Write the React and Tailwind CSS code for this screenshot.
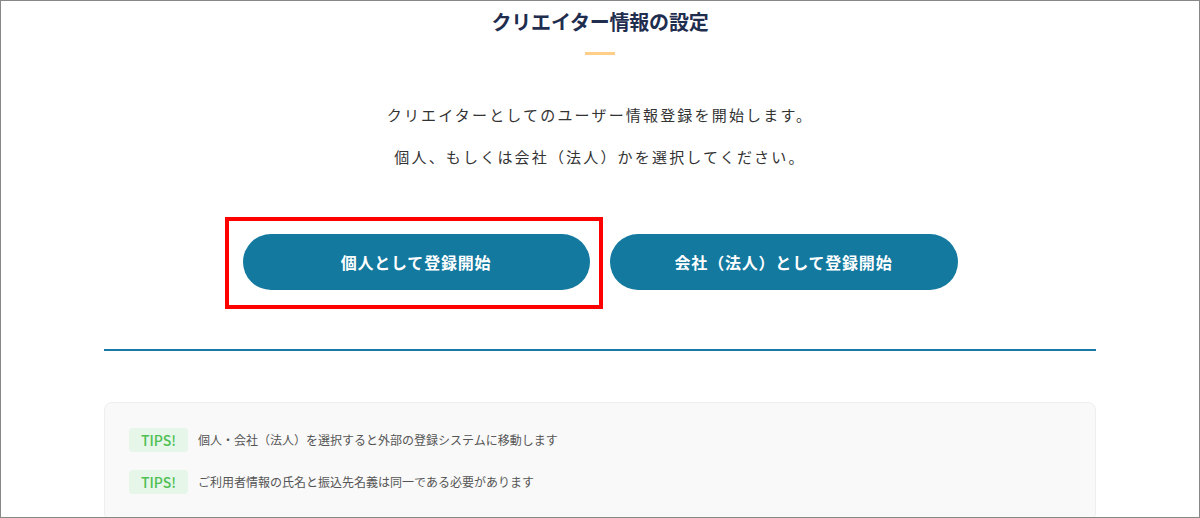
import React from 'react';

const tips = [
  '個人・会社（法人）を選択すると外部の登録システムに移動します',
  'ご利用者情報の氏名と振込先名義は同一である必要があります',
];

const App = () => {
  return (
    <div
      className="h-[518px] w-[1200px] overflow-hidden border border-[#888] bg-white"
      style={{ fontFamily: '"Noto Sans CJK JP", "Noto Sans", sans-serif' }}
    >
      <div className="mx-auto flex w-[992px] flex-col items-center pt-[7px]">
        {/* 見出し */}
        <h1 className="text-[20px] font-bold leading-[28px] tracking-[-0.01em] text-[#1f2d4f]">
          クリエイター情報の設定
        </h1>
        <div className="mt-[16px] h-[3px] w-[30px] bg-[#ffcf87]" />

        {/* 説明文 */}
        <div className="mt-[39px] text-center text-[15px] leading-[42px] tracking-[0.145em] text-[#333]">
          <p>クリエイターとしてのユーザー情報登録を開始します。</p>
          <p>個人、もしくは会社（法人）かを選択してください。</p>
        </div>

        {/* ボタン */}
        <div className="mt-[56px] flex gap-[20px]">
          <div className="relative">
            <button className="h-[56px] w-[347px] rounded-full bg-[#13799f] text-[16px] font-bold tracking-[0.05em] text-white">
              個人として登録開始
            </button>
            <span className="pointer-events-none absolute left-[-18px] top-[-17px] h-[92px] w-[378px] border-[4px] border-[#ff0000]" />
          </div>
          <button className="h-[56px] w-[348px] rounded-full bg-[#13799f] text-[16px] font-bold tracking-[0.05em] text-white">
            会社（法人）として登録開始
          </button>
        </div>

        <div className="mt-[59px] h-[2px] w-full bg-[#1a7aa3]" />

        {/* TIPS */}
        <div className="mt-[51px] w-full rounded-[8px] border border-[#eee] bg-[#f9f9f9] px-[24px] pb-[26px] pt-[25px]">
          <div className="flex flex-col gap-[18px]">
            {tips.map((tip) => (
              <div key={tip} className="flex items-center gap-[10px]">
                <span className="flex h-[24px] w-[59px] items-center justify-center rounded-[4px] bg-[#e6f6e9] text-[14px] font-medium text-[#4fbf52]">
                  TIPS!
                </span>
                <span className="text-[12px] text-[#555]">{tip}</span>
              </div>
            ))}
          </div>
        </div>
      </div>
    </div>
  );
};

export default App;
